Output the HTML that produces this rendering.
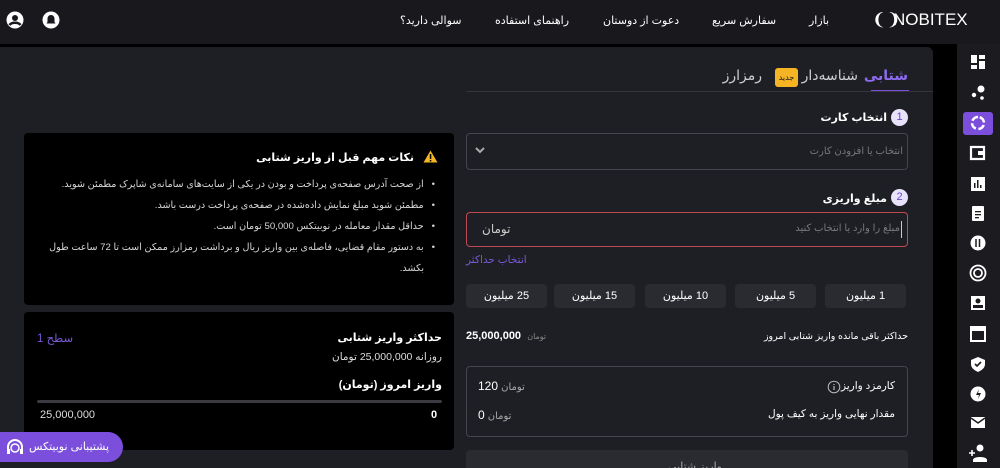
<!DOCTYPE html>
<html><head><meta charset="utf-8"><style>
*{box-sizing:border-box;margin:0;padding:0}
html,body{width:1000px;height:468px;overflow:hidden}
body{background:#000;font-family:"Liberation Sans","DejaVu Sans",sans-serif;color:#e8e8ea;position:relative}
.abs{position:absolute}
.hdr{left:0;top:0;width:1000px;height:44px;background:#18181d}
.hdr span{position:absolute;top:14px;font-size:11px;color:#fff;direction:rtl;white-space:nowrap}
.main{left:0;top:47px;width:933px;height:421px;background:#1e1f24;border-radius:0 6px 0 0}
.side{left:957px;top:44px;width:43px;height:424px;background:#1b1b20}
.t{position:absolute;direction:rtl;white-space:nowrap;font-size:11px}
.card{position:absolute;background:#000;border-radius:4px}
.btn{position:absolute;top:284px;width:81px;height:24px;background:#2a2b31;border-radius:4px;font-size:11px;text-align:center;line-height:24px;direction:rtl;color:#fff}
.li{font-size:9.6px;color:#d8d8d8}
</style></head><body>
<div class="abs hdr">
  <svg class="abs" style="left:6px;top:11px" width="18" height="18" viewBox="0 0 18 18"><circle cx="9" cy="9" r="8.5" fill="#fff"/><circle cx="9" cy="7" r="3" fill="#18181d"/><path d="M3.5 14c2-3 9-3 11 0" stroke="#18181d" stroke-width="2.5" fill="none"/></svg>
  <svg class="abs" style="left:42px;top:11px" width="18" height="18" viewBox="0 0 18 18"><circle cx="9" cy="9" r="8.5" fill="#fff"/><path d="M9 4c-2.5 0-3.5 2-3.5 4v3l-1 1.5h9l-1-1.5V8c0-2-1-4-3.5-4z" fill="#18181d"/></svg>
  <span style="left:400px">سوالی دارید؟</span>
  <span style="left:495px">راهنمای استفاده</span>
  <span style="left:603px">دعوت از دوستان</span>
  <span style="left:712px">سفارش سریع</span>
  <span style="left:809px">بازار</span>
  <span style="left:872px;top:10px;font-size:17px">❨❩</span>
  <span style="left:893px;top:10px;font-size:17px;direction:ltr">NOBITEX</span>
</div>
<div class="abs main"></div>
<div class="abs side"></div>
<div class="abs" style="left:963px;top:112px;width:30px;height:23px;background:#7b4fdc;border-radius:3px"></div>
<svg class="abs" style="left:957px;top:44px" width="43" height="424" viewBox="0 0 43 424" fill="#fff">
<rect x="14" y="11" width="6" height="8"/><rect x="22" y="11" width="6" height="4"/><rect x="14" y="21" width="6" height="4"/><rect x="22" y="17" width="6" height="8"/>
<circle cx="24" cy="45" r="3.5"/><circle cx="17" cy="51" r="2.2"/><circle cx="25" cy="54" r="1.8"/>
<path d="M21 73a6 6 0 1 0 0.01 0" stroke="#fff" stroke-width="2.5" fill="none" stroke-dasharray="7 2.5"/>
<path d="M14 103h13v12h-13z" fill="none" stroke="#fff" stroke-width="2.2"/><rect x="21" y="107" width="6" height="4"/>
<rect x="14" y="133" width="14" height="14"/><rect x="17" y="139" width="1.5" height="5" fill="#1b1b20"/><rect x="20" y="136" width="1.5" height="8" fill="#1b1b20"/><rect x="23" y="141" width="1.5" height="3" fill="#1b1b20"/>
<rect x="15" y="162" width="12" height="15" rx="1"/><rect x="18" y="167" width="6" height="1.3" fill="#1b1b20"/><rect x="18" y="170" width="6" height="1.3" fill="#1b1b20"/><rect x="18" y="173" width="4" height="1.3" fill="#1b1b20"/>
<circle cx="21" cy="199" r="7.5"/><path d="M19 195v8M22.5 195v8" stroke="#1b1b20" stroke-width="1.5"/>
<circle cx="21" cy="229" r="7.5" fill="none" stroke="#fff" stroke-width="1.8"/><circle cx="21" cy="229" r="4" fill="none" stroke="#fff" stroke-width="1.8"/>
<rect x="14" y="252" width="14" height="14"/><circle cx="21" cy="257" r="2.5" fill="#1b1b20"/><rect x="16" y="261" width="10" height="3" fill="#1b1b20"/>
<rect x="14" y="283" width="14" height="14" fill="none" stroke="#fff" stroke-width="2"/><rect x="14" y="283" width="14" height="4"/>
<path d="M21 313l7 3v4c0 4-3 6-7 8-4-2-7-4-7-8v-4z"/><path d="M18 320l2 2 4-4" stroke="#1b1b20" stroke-width="1.6" fill="none"/>
<circle cx="21" cy="350" r="7.5"/><path d="M22 345l-3 6h3l-1 4 3-6h-3z" fill="#1b1b20"/>
<path d="M14 373h14v11h-14z"/><path d="M14 374l7 5 7-5" stroke="#1b1b20" stroke-width="1.5" fill="none"/>
<circle cx="23" cy="404" r="3.5"/><path d="M16 416c0-4 14-4 14 0v2h-14z"/><path d="M12 409h6M15 406v6" stroke="#fff" stroke-width="1.6"/>
</svg>

<div class="t" style="right:92px;top:67px;font-size:14px;color:#8e6cf0;font-weight:bold">شتابی</div>
<div class="abs" style="left:871px;top:90px;width:38px;height:2px;background:#7b4fdc"></div>
<div class="abs" style="left:466px;top:91px;width:467px;height:1px;background:#34353b"></div>
<div class="t" style="right:142px;top:67px;font-size:14px;color:#cfcfd3">شناسه‌دار</div>
<div class="abs" style="left:775px;top:68px;width:23px;height:19px;background:#f5b423;border-radius:3px;font-size:8px;color:#222;text-align:center;line-height:19px">جدید</div>
<div class="t" style="right:238px;top:67px;font-size:14px;color:#cfcfd3">رمزارز</div>

<div class="abs" style="left:891px;top:109px;width:17px;height:17px;border-radius:50%;background:#e8e3fb;color:#6a48d0;font-size:11px;text-align:center;line-height:17px">1</div>
<div class="t" style="right:113px;top:111px;font-weight:bold;color:#fff">انتخاب کارت</div>
<div class="abs" style="left:466px;top:133px;width:442px;height:37px;border:1px solid #44464d;border-radius:4px"></div>
<div class="t" style="right:97px;top:146px;font-size:10px;color:#77787e">انتخاب یا افزودن کارت</div>
<svg class="abs" style="left:474px;top:145px" width="12" height="10"><path d="M2 3l4 4 4-4" stroke="#aaa" stroke-width="2" fill="none"/></svg>

<div class="abs" style="left:891px;top:189px;width:17px;height:17px;border-radius:50%;background:#e8e3fb;color:#6a48d0;font-size:11px;text-align:center;line-height:17px">2</div>
<div class="t" style="right:113px;top:192px;font-weight:bold;color:#fff">مبلغ واریزی</div>
<div class="abs" style="left:466px;top:212px;width:442px;height:35px;border:1px solid #c0494f;border-radius:4px"></div>
<div class="abs" style="left:901px;top:221px;width:1px;height:17px;background:#ccc"></div>
<div class="t" style="right:100px;top:223px;font-size:10px;color:#77787e">مبلغ را وارد یا انتخاب کنید</div>
<div class="t" style="left:482px;top:222px;font-size:12px;color:#ccc">تومان</div>
<div class="t" style="left:466px;top:254px;font-size:10.5px;color:#7b5ad8">انتخاب حداکثر</div>

<div class="btn" style="left:825px">1 میلیون</div>
<div class="btn" style="left:735px">5 میلیون</div>
<div class="btn" style="left:645px">10 میلیون</div>
<div class="btn" style="left:554px">15 میلیون</div>
<div class="btn" style="left:466px">25 میلیون</div>

<div class="t" style="right:92px;top:331px;font-size:9.5px;color:#fff">حداکثر باقی مانده واریز شتابی امروز</div>
<div class="t" style="left:466px;top:330px;font-size:11px;color:#fff;direction:ltr"><span style="font-size:8px;color:#888">تومان</span>&nbsp; <b>25,000,000</b></div>

<div class="abs" style="left:466px;top:366px;width:442px;height:71px;border:1px solid #44464d;border-radius:4px"></div>
<div class="t" style="right:105px;top:380px;color:#fff;font-size:10.5px">کارمزد واریز</div>
<svg class="abs" style="left:827px;top:380px" width="14" height="14"><circle cx="7" cy="7" r="5.8" fill="none" stroke="#bbb" stroke-width="1"/><path d="M7 6v4M7 4v1" stroke="#bbb" stroke-width="1.2"/></svg>
<div class="t" style="left:478px;top:379px;direction:ltr;color:#fff"><span style="font-size:10px;color:#aaa">تومان</span> <span style="font-size:12px">120</span></div>
<div class="t" style="right:105px;top:408px;color:#fff;font-size:10.5px">مقدار نهایی واریز به کیف پول</div>
<div class="t" style="left:478px;top:408px;direction:ltr;color:#fff"><span style="font-size:10px;color:#aaa">تومان</span> <span style="font-size:12px">0</span></div>
<div class="abs" style="left:466px;top:450px;width:442px;height:30px;background:#2a2b31;border-radius:4px"></div>
<div class="t" style="left:668px;top:460px;color:#aaa">واریز شتابی</div>

<div class="card" style="left:24px;top:133px;width:430px;height:172px"></div>
<svg class="abs" style="left:423px;top:150px" width="15" height="13"><path d="M7.5 0.5L14.5 12.5H0.5Z" fill="#f5b423"/><rect x="6.8" y="4" width="1.5" height="5" fill="#000"/><rect x="6.8" y="10" width="1.5" height="1.5" fill="#000"/></svg>
<div class="t" style="right:586px;top:151px;font-weight:bold;color:#fff;font-size:11px">نکات مهم قبل از واریز شتابی</div>
<div class="t li" style="right:565px;top:179px">•&nbsp;&nbsp; از صحت آدرس صفحه‌ی پرداخت و بودن در یکی از سایت‌های سامانه‌ی شاپرک مطمئن شوید.</div>
<div class="t li" style="right:565px;top:200px">•&nbsp;&nbsp; مطمئن شوید مبلغ نمایش داده‌شده در صفحه‌ی پرداخت درست باشد.</div>
<div class="t li" style="right:565px;top:221px">•&nbsp;&nbsp; حداقل مقدار معامله در نوبیتکس 50,000 تومان است.</div>
<div class="t li" style="right:565px;top:242px">•&nbsp;&nbsp; به دستور مقام قضایی، فاصله‌ی بین واریز ریال و برداشت رمزارز ممکن است تا 72 ساعت طول</div>
<div class="t li" style="right:576px;top:263px">بکشد.</div>

<div class="card" style="left:24px;top:312px;width:430px;height:138px"></div>
<div class="t" style="right:558px;top:331px;font-weight:bold;color:#fff">حداکثر واریز شتابی</div>
<div class="t" style="left:37px;top:331px;color:#7b5ad8;font-size:11.5px">سطح 1</div>
<div class="t" style="right:558px;top:351px;color:#ddd;font-size:10.5px">روزانه 25,000,000 تومان</div>
<div class="t" style="right:558px;top:378px;font-weight:bold;color:#fff">واریز امروز (تومان)</div>
<div class="abs" style="left:37px;top:400px;width:405px;height:3px;background:#3a3b40;border-radius:2px"></div>
<div class="t" style="left:40px;top:409px;color:#ddd;direction:ltr">25,000,000</div>
<div class="t" style="left:431px;top:409px;color:#fff;font-weight:bold">0</div>

<div class="abs" style="left:0;top:432px;width:123px;height:30px;background:#7b4fdc;border-radius:0 15px 15px 0"></div>
<svg class="abs" style="left:5px;top:437px" width="20" height="20"><path d="M3 14V10a7 7 0 0 1 14 0v4" stroke="#fff" stroke-width="2" fill="none"/><circle cx="10" cy="11" r="4" fill="none" stroke="#fff" stroke-width="1.5"/><rect x="2" y="12" width="3" height="5" fill="#fff"/><rect x="15" y="12" width="3" height="5" fill="#fff"/></svg>
<div class="t" style="left:29px;top:440px;color:#fff;font-size:11px">پشتیبانی نوبیتکس</div>
</body></html>
